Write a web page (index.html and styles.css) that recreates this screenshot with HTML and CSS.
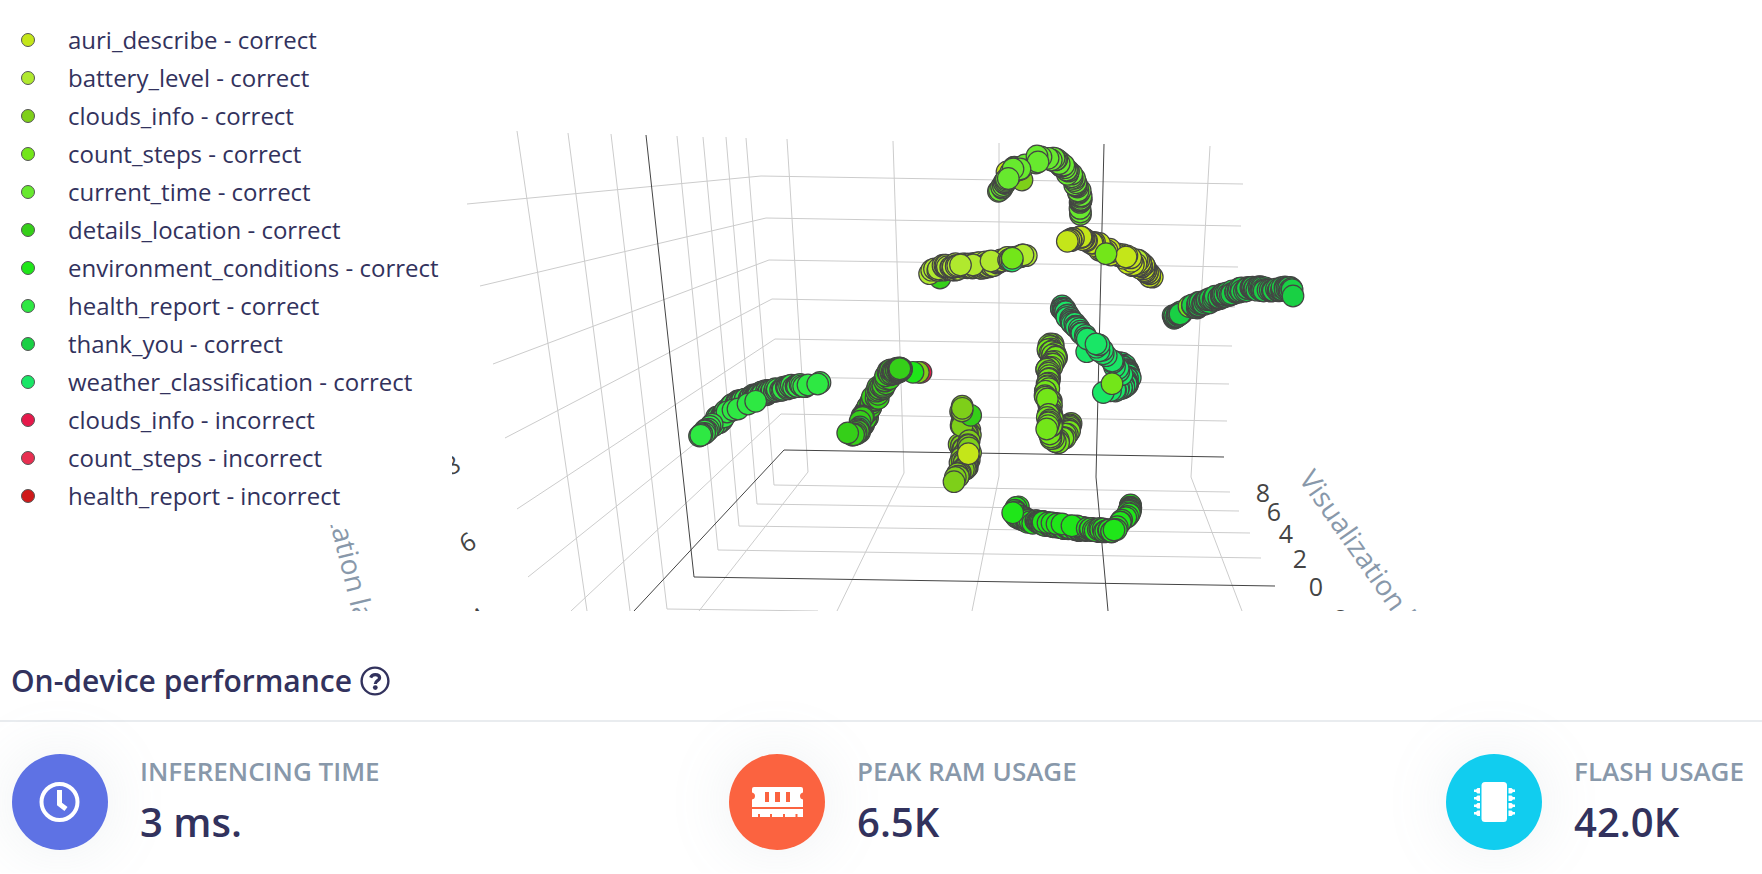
FILE: index.html
```html
<!DOCTYPE html>
<html lang="en">
<head>
<meta charset="utf-8">
<title>Model testing</title>
<link rel="stylesheet" href="styles.css">
</head>
<body>
<section class="explorer">
  <svg class="scene" viewBox="0 0 1762 611" role="img" aria-label="Feature explorer">
    <g class="grid">
      <path d="M517 131L587 611M568 133L630 611M611 134L667 609L818 611M677 136L718 550L1261 558M703 137L739 526L1250 533M726 137L757 504L1239 511M746 138L774 485L1230 492M787 139L808 472L699 611M893 141L904 473L837 611M999 143L999 476L972 611M1210 146L1191 477L1242 611"/>
      <path d="M467 204L761 176L1243 184M480 286L766 218L1241 226M493 364L769 260L1238 267M505 438L772 299L1235 307M517 509L775 339L1232 346M528 577L778 377L1229 384M571 611L781 414L1227 421"/>
      <path class="zero" d="M646 135L694 577L1275 586M634 611L784 450L1224 457M1104 144L1096 477L1108 611"/>
    </g>
    <g class="ticks">
      <text x="1263" y="502">8</text>
      <text x="1274" y="521">6</text>
      <text x="1286" y="543">4</text>
      <text x="1300" y="568">2</text>
      <text x="1316" y="596">0</text>
      <text x="1337" y="628">-2</text>
      <text transform="translate(456 473) rotate(-26)">8</text>
      <text transform="translate(472 550) rotate(-30)">6</text>
      <text transform="translate(484 625) rotate(-34)">4</text>
    </g>
    <g class="axis-titles">
      <text transform="translate(1298 479) rotate(55)">Visualization layer 1</text>
      <text transform="translate(308 435) rotate(76)">Visualization layer 2</text>
    </g>
    <g class="points" id="points"></g>
  </svg>
  <ul class="legend" id="legend"></ul>
</section>

<section class="performance">
  <h2 class="heading">On-device performance
    <svg class="help" viewBox="0 0 30 30" aria-hidden="true">
      <circle cx="15" cy="15" r="13.4" fill="none" stroke="currentColor" stroke-width="2.4"/>
      <path d="M10.6 11.6C11.5 9.6 13 8.6 15.2 8.6C17.8 8.6 19.6 9.9 19.6 11.9C19.6 14.8 15.3 14.5 15.3 17.9" fill="none" stroke="currentColor" stroke-width="3.2"/>
      <circle cx="15.3" cy="21.6" r="2.4" fill="currentColor"/>
    </svg>
  </h2>
  <div class="stats">
    <article class="stat">
      <div class="badge badge-time">
        <svg viewBox="0 0 96 96" aria-hidden="true">
          <circle cx="47.5" cy="48" r="18" fill="none" stroke="#fff" stroke-width="4"/>
          <path d="M47.5 36V50L54 55" fill="none" stroke="#fff" stroke-width="5"/>
        </svg>
      </div>
      <div class="figures"><h3 class="label">INFERENCING TIME</h3><p class="value">3 ms.</p></div>
    </article>
    <article class="stat">
      <div class="badge badge-ram">
        <svg viewBox="0 0 96 96" aria-hidden="true">
          <path fill="#fff" fill-rule="evenodd" d="M25 33H72Q74 33 74 35V38.5Q71 39 71 42T74 45.5V53H23V45.5Q26 45 26 42T23 38.5V35Q23 33 25 33ZM36 38V48H40V38ZM46 38V48H51V38ZM57 38V48H61V38Z"/>
          <path fill="#fff" d="M23 55H74V63H68.5V60H66.5V63H56V60H54V63H43V60H41V63H31V60H29V63H23Z"/>
        </svg>
      </div>
      <div class="figures"><h3 class="label">PEAK RAM USAGE</h3><p class="value">6.5K</p></div>
    </article>
    <article class="stat">
      <div class="badge badge-flash">
        <svg viewBox="0 0 96 96" aria-hidden="true">
          <rect x="35.5" y="28" width="25.5" height="40" rx="3.5" fill="#fff"/>
          <path fill="#fff" d="M28 35.5H30L31.5 34H34V39.5H31.5L30 38H28ZM28 43H30L31.5 41.5H34V47H31.5L30 45.5H28ZM28 50.5H30L31.5 49H34V54.5H31.5L30 53H28ZM28 58H30L31.5 56.5H34V62H31.5L30 60.5H28ZM69 35.5H67L65.5 34H62.5V39.5H65.5L67 38H69ZM69 43H67L65.5 41.5H62.5V47H65.5L67 45.5H69ZM69 50.5H67L65.5 49H62.5V54.5H65.5L67 53H69ZM69 58H67L65.5 56.5H62.5V62H65.5L67 60.5H69Z"/>
        </svg>
      </div>
      <div class="figures"><h3 class="label">FLASH USAGE</h3><p class="value">42.0K</p></div>
    </article>
  </div>
</section>
<script src="explorer.js"></script>
</body>
</html>
```
FILE: styles.css
```css
* { box-sizing: border-box; }
body {
  margin: 0;
  background: #fff;
  color: #32325d;
  font-family: "Open Sans", "Noto Sans", sans-serif;
  overflow-x: hidden;
}
.explorer { display: grid; }
.scene, .legend { grid-area: 1 / 1; }
.scene { display: block; width: 100%; height: auto; overflow: hidden; }
.grid path { fill: none; stroke: #ccc; stroke-width: 1; }
.grid .zero { stroke: #444; }
.ticks { fill: #444; font-size: 25px; text-anchor: middle; }
.axis-titles { fill: #8898aa; font-size: 28px; }
.points circle { stroke: #444; stroke-width: 1.2; }

.legend {
  list-style: none;
  margin: 0;
  padding: 21px 13px 10px 21px;
  background: #fff;
  justify-self: start;
  align-self: start;
  z-index: 1;
}
.legend li {
  display: flex;
  align-items: center;
  gap: 33px;
  height: 38px;
  font-size: 24px;
  line-height: 38px;
  white-space: nowrap;
}
.dot {
  width: 14px;
  height: 14px;
  border: 1px solid #555;
  border-radius: 50%;
}

.heading {
  display: flex;
  align-items: center;
  gap: 8px;
  margin: 0;
  padding: 49px 11px 18px;
  height: 111px;
  border-bottom: 2px solid #e9ecef;
  font-size: 30px;
  font-weight: 600;
  line-height: 42px;
}
.help { width: 30px; height: 30px; }
.stats {
  display: grid;
  grid-template-columns: 1fr 1fr auto;
  padding: 29px 18px 20px 12px;
}
.stat { display: flex; align-items: center; gap: 32px; }
.badge {
  width: 96px;
  height: 96px;
  border-radius: 50%;
  box-shadow: 0 0 64px rgba(136, 152, 170, .15);
}
.badge svg { display: block; width: 100%; height: 100%; }
.badge-time { background: #5e72e4; }
.badge-ram { background: #fb6340; }
.badge-flash { background: #11cdef; }
.label {
  margin: 0;
  color: #8898aa;
  font-size: 26px;
  font-weight: 600;
  line-height: 40px;
}
.value {
  margin: 0;
  font-size: 40px;
  font-weight: 600;
  line-height: 62px;
}
```
FILE: explorer.js
```js
const classes = [
  ["auri_describe - correct", "#c4e619"],
  ["battery_level - correct", "#b0e92e"],
  ["clouds_info - correct", "#7ecf19"],
  ["count_steps - correct", "#73e619"],
  ["current_time - correct", "#67e92e"],
  ["details_location - correct", "#35cf19"],
  ["environment_conditions - correct", "#1fe619"],
  ["health_report - correct", "#2ee843"],
  ["thank_you - correct", "#19d044"],
  ["weather_classification - correct", "#19e666"],
  ["clouds_info - incorrect", "#e6194b"],
  ["count_steps - incorrect", "#e82e50"],
  ["health_report - incorrect", "#cf1919"]
];
const [AURI, BATT, CLOUD, COUNT, TIME, LOC, ENV, HEALTH, THANK, WEATHER, BAD] =
  classes.map(c => c[1]);

const legend = document.getElementById("legend");
for (const [name, color] of classes) {
  const li = document.createElement("li");
  const dot = document.createElement("span");
  dot.className = "dot";
  dot.style.background = color;
  li.append(dot, name);
  legend.append(li);
}

const layer = document.getElementById("points");
let seed = 7;
const rand = () => (seed = (seed * 16807) % 2147483647) / 2147483647;

function dot(color, x, y) {
  const c = document.createElementNS("http://www.w3.org/2000/svg", "circle");
  c.setAttribute("cx", x.toFixed(1));
  c.setAttribute("cy", y.toFixed(1));
  c.setAttribute("r", 10.8);
  c.setAttribute("fill", color);
  layer.append(c);
}

/* Spreads samples along a polyline, with the given mean step and sideways scatter. */
function trail(color, step, scatter, pts) {
  for (let i = 1; i < pts.length; i++) {
    const [x0, y0] = pts[i - 1], [x1, y1] = pts[i];
    const len = Math.hypot(x1 - x0, y1 - y0);
    for (let d = 0; d < len; d += step * (0.2 + 1.9 * rand())) {
      const t = d / len;
      dot(color, x0 + (x1 - x0) * t + (rand() - .5) * scatter,
                 y0 + (y1 - y0) * t + (rand() - .5) * scatter);
    }
  }
}
const marks = (color, ...pts) => pts.forEach(p => dot(color, p[0], p[1]));

/* current_time */
trail(TIME, 3, 1, [[1081,214],[1080,207]]);
trail(TIME, .5, 2, [[1080,202],[1081,195]]);
trail(TIME, 1.4, 3, [[1080,194],[1073,178],[1062,165],[1050,157]]);
trail(TIME, 2.2, 4, [[1062,164],[1055,159],[1045,156]]);
marks(AURI, [1007,172]);
marks(CLOUD, [1022,180]);
trail(TIME, 1.7, 2, [[999,191],[1005,183],[1010,173]]);
trail(TIME, .9, 4, [[1014,169],[1022,168]]);
marks(TIME, [1025,165],[1036,163],[1041,157],[1037,156],[1038,162],[1020,169],[1013,169],[1008.3,178.5]);

/* battery_level */
marks(LOC, [940,278]);
trail(BATT, 2, 4, [[931,272],[945,268]]);
trail(BATT, .7, 6, [[944,268],[960,267],[985,265],[997,263]]);
trail(BATT, 1.4, 3, [[997,261],[1012,258],[1026,255]]);
marks(BATT, [938.3,269]);
trail(BATT, .9, 4, [[944,267],[957,265]]);
marks(BATT, [973,265],[991,261],[960.5,265],[1023,255]);
trail(BATT, 1, 2, [[1008,260],[1012,259]]);
marks(WEATHER, [1012,261]);
marks(COUNT, [1012.3,258.3]);

/* auri_describe */
trail(AURI, 1.7, 2, [[1152,277],[1146,272]]);
trail(AURI, .45, 4, [[1147,272],[1138,262]]);
marks(BATT, [1137,260]);
trail(AURI, .8, 5, [[1134,264],[1129,260]]);
trail(AURI, 1.4, 5, [[1129,259],[1120,256],[1106,250],[1092,243]]);
marks(AURI, [1126,257],[1092,243]);
trail(AURI, .8, 2, [[1086,240],[1080,237]]);
marks(AURI, [1081,237]);
trail(AURI, .7, 2, [[1074,239],[1069,241]]);
marks(AURI, [1067.3,241.3]);
marks(COUNT, [1106,253.7]);

/* thank_you */
trail(THANK, .5, 3, [[1174,317],[1182,312]]);
marks(THANK, [1180,314]);
marks(COUNT, [1189,306.5]);
trail(THANK, .65, 4, [[1194,307],[1213,299],[1237,291],[1250,288],[1264,289]]);
marks(THANK, [1264,291],[1268,290]);
trail(THANK, 1, 3, [[1270,290],[1282,289]]);
trail(THANK, .5, 4, [[1284,289],[1291,289]]);
marks(THANK, [1293,296]);

/* weather_classification */
trail(WEATHER, .6, 3, [[1061,307],[1068,315]]);
trail(WEATHER, 1.4, 2, [[1067,316],[1086,338]]);
marks(WEATHER, [1086.7,351.7]);
trail(WEATHER, .6, 4, [[1121,361],[1129,376],[1124,387]]);
trail(WEATHER, 2, 4, [[1124,386],[1111,393]]);
trail(WEATHER, 2.3, 5, [[1121,376],[1110,360],[1098,346]]);
marks(WEATHER, [1087.3,339],[1096,344],[1103.3,392.5]);
marks(COUNT, [1112,383.7]);

/* count_steps */
trail(COUNT, .8, 5, [[1053,344],[1049,349],[1055,357]]);
trail(COUNT, 1.2, 4, [[1056,357],[1048,369],[1047,386],[1047,397]]);
trail(COUNT, .6, 4, [[1070,424],[1067,432]]);
trail(COUNT, 1.3, 4, [[1068,433],[1057,442],[1048,432]]);
trail(COUNT, 1, 5, [[1050,400],[1051,425]]);
marks(COUNT, [1047.3,399],[1049,415]);
trail(COUNT, 2, 3, [[1049,414],[1047,428]]);
marks(COUNT, [1046.7,429]);

/* environment_conditions */
trail(ENV, 1.5, 2, [[1018,506],[1015,512]]);
trail(ENV, 1, 4, [[1015,513],[1026,521],[1040,522]]);
trail(ENV, .6, 4, [[1040,523],[1072,528],[1100,531]]);
marks(ENV, [1043,522],[1048,523],[1052,523],[1057,524],[1062,524],[1077,526],[1072,525.7]);
trail(ENV, 1.2, 3, [[1088,529],[1112,531]]);
trail(ENV, .5, 2, [[1131,505],[1129,513]]);
trail(ENV, 2, 3, [[1129,513],[1115,529]]);
marks(ENV, [1012.7,512.7],[1114,530]);

/* health_report */
trail(HEALTH, .8, 4, [[715,420],[736,403],[750,398],[770,391]]);
trail(HEALTH, 2, 2, [[722,420],[712,426]]);
trail(HEALTH, 1.1, 3, [[755,398],[770,391],[796,386],[806,385]]);
marks(HEALTH, [724,417],[727,412],[733,410],[738,409],[748,404],[755.7,401.3]);
trail(HEALTH, 1.9, 2, [[713,425],[700,436]]);
marks(HEALTH, [699.5,436],[808,385],[820,382.5],[817.7,384],[700.7,435.3]);

/* details_location */
marks(BAD, [921,372.3]);
marks(CLOUD, [918.3,372.3]);
marks(ENV, [913,372.3]);
trail(LOC, .7, 4, [[857,432],[865,420]]);
trail(LOC, 1, 5, [[867,420],[867,412],[876,396],[886,380],[893,373]]);
trail(LOC, .4, 5, [[888,374],[901,369]]);
trail(LOC, .4, 4, [[896,371],[902,369]]);
marks(COUNT, [862,416]);
trail(LOC, 1.5, 2, [[863,416],[861,421]]);
marks(THANK, [860,427]);
trail(LOC, .7, 3, [[860,430],[852,435]]);
marks(LOC, [847.7,433]);

/* clouds_info */
trail(CLOUD, 1.5, 4, [[962,408],[963,426],[970,432]]);
trail(CLOUD, 1.1, 6, [[970,432],[961,446],[970,457],[960,462],[968,466]]);
marks(CLOUD, [962,426]);
trail(CLOUD, 1.2, 3, [[966,466],[956,478]]);
marks(LOC, [970.7,415.3]);
trail(CLOUD, 2, 2, [[969,440],[968,449]]);
marks(CLOUD, [962,411],[962.3,408.3],[954,481.7]);
marks(AURI, [968.3,453.7]);
```
